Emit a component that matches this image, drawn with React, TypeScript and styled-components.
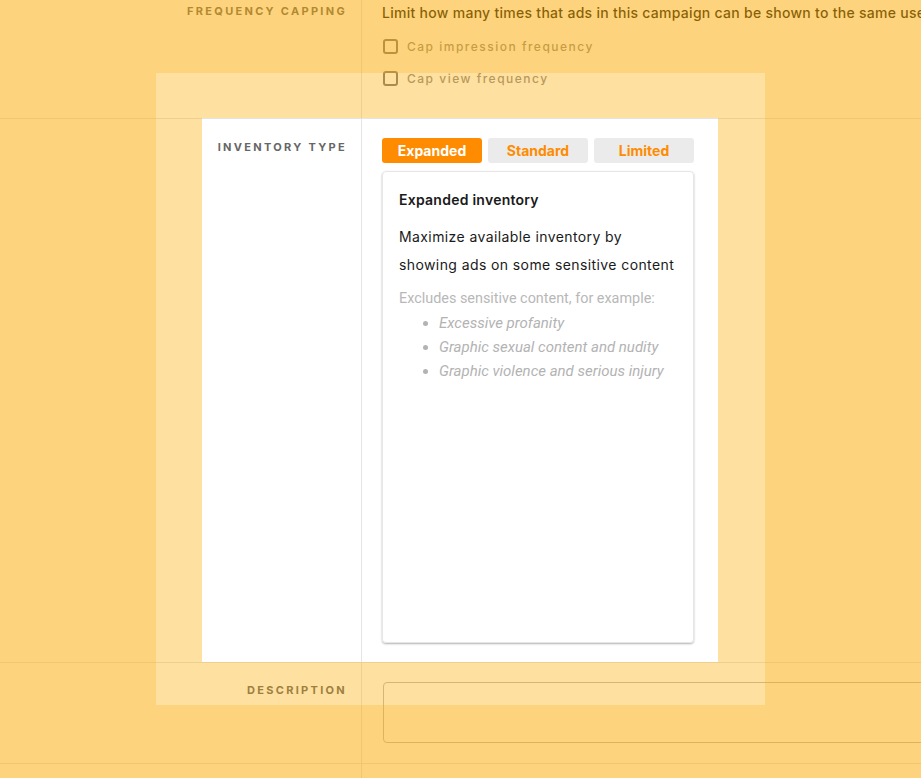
import React, { useState } from 'react';
import styled, { createGlobalStyle } from 'styled-components';

const GlobalStyle = createGlobalStyle`
  html, body {
    margin: 0;
    padding: 0;
    background: #fff;
    overflow: hidden;
  }
  body {
    font-family: Inter, "Noto Sans", sans-serif;
    color: #222;
  }
`;

//#region form
const Page = styled.div`
  width: 1400px;
  margin-top: -17px;
`;

const Row = styled.div`
  display: grid;
  grid-template-columns: 362px 1fr;
  border-bottom: 1px solid #e4e4e4;
`;

const Label = styled.div<{ $top?: number }>`
  box-sizing: border-box;
  padding: ${(p) => p.$top ?? 20}px 14px 0 0;
  border-right: 1px solid #e4e4e4;
  text-align: right;
  font-size: 11px;
  line-height: 16px;
  font-weight: 700;
  letter-spacing: 2.3px;
  text-transform: uppercase;
  color: #666;
`;

const Content = styled.div<{ $top?: number; $bottom?: number }>`
  padding: ${(p) => p.$top ?? 20}px 20px ${(p) => p.$bottom ?? 20}px 20px;
`;

const Lead = styled.div`
  font-size: 14px;
  line-height: 20px;
  font-weight: 500;
  letter-spacing: 0.28px;
  color: #111;
`;

const CheckList = styled.div`
  margin-top: 7px;
  display: flex;
  flex-direction: column;
`;

const CheckRow = styled.label`
  display: flex;
  align-items: center;
  height: 32px;
  gap: 9px;
  font-size: 12px;
  font-weight: 500;
  letter-spacing: 1.5px;
  color: #8f8f8f;
`;

const Box = styled.span`
  box-sizing: border-box;
  width: 15px;
  height: 15px;
  margin-left: 1px;
  border: 2px solid #7a7a7a;
  border-radius: 3px;
`;

const Tabs = styled.div`
  display: flex;
  gap: 6px;
`;

const Tab = styled.button<{ $active: boolean }>`
  width: 100px;
  height: 25px;
  padding: 0 0 1px;
  border: none;
  border-radius: 3px;
  font-family: Inter, "Noto Sans", sans-serif;
  font-size: 14px;
  font-weight: 700;
  cursor: pointer;
  background: ${(p) => (p.$active ? '#ff8c00' : '#ebebeb')};
  color: ${(p) => (p.$active ? '#fff' : '#ff8c00')};
`;

const Card = styled.div`
  box-sizing: border-box;
  width: 312px;
  height: 472px;
  margin-top: 8px;
  padding: 19px 16px;
  border: 1px solid #e6e6e6;
  border-radius: 4px;
  box-shadow: 0 1px 2px rgba(0, 0, 0, 0.3);
`;

const CardTitle = styled.div`
  font-size: 14px;
  line-height: 18px;
  font-weight: 600;
  letter-spacing: 0.25px;
  color: #1a1a1a;
`;

const CardText = styled.p`
  margin: 14px 0 0;
  font-size: 14px;
  line-height: 28px;
  letter-spacing: 0.4px;
  color: #1a1a1a;
`;

const Note = styled.div`
  margin-top: 8px;
  font-family: Roboto, "Liberation Sans", sans-serif;
  font-size: 14.4px;
  line-height: 24px;
  color: #b8b8b8;
`;

const NoteList = styled.ul`
  margin: 0;
  padding-left: 40px;
  font-size: 15px;
  font-style: italic;
  color: #b3b3b3;
`;

const TextArea = styled.div`
  box-sizing: border-box;
  height: 61px;
  margin-left: 1px;
  border: 1px solid #bdbdbd;
  border-radius: 4px;
`;
//#endregion

//#region spotlight
const Spotlight = styled.div`
  position: fixed;
  left: 156px;
  top: 73px;
  width: 609px;
  height: 632px;
  overflow: hidden;
  pointer-events: none;
  box-shadow: 0 0 0 3000px rgba(251, 170, 0, 0.51);
`;

const Hole = styled.div`
  position: absolute;
  left: 46px;
  top: 45px;
  right: 47px;
  bottom: 43px;
  box-shadow: 0 0 0 400px rgba(251, 170, 0, 0.37);
`;
//#endregion

const tabs = {
  Expanded: {
    title: 'Expanded inventory',
    text: ['Maximize available inventory by', 'showing ads on some sensitive content'],
    items: ['Excessive profanity', 'Graphic sexual content and nudity', 'Graphic violence and serious injury'],
  },
  Standard: {
    title: 'Standard inventory',
    text: ['Show ads on content that is', 'appropriate for most brands'],
    items: ['Strong profanity', 'Strong sexual content and discussions of sex', 'Violence, including violence causing injury'],
  },
  Limited: {
    title: 'Limited inventory',
    text: ['Show ads on content that is', 'free of most sensitive topics'],
    items: ['Moderate profanity', 'Moderate sexual content', 'Depictions of violence'],
  },
};

type TabName = keyof typeof tabs;

export default function App() {
  const [tab, setTab] = useState<TabName>('Expanded');
  const current = tabs[tab];

  return (
    <>
      <GlobalStyle />
      <Page>
        <Row>
          <Label>Frequency capping</Label>
          <Content $bottom={24}>
            <Lead>Limit how many times that ads in this campaign can be shown to the same user</Lead>
            <CheckList>
              <CheckRow><Box />Cap impression frequency</CheckRow>
              <CheckRow><Box />Cap view frequency</CheckRow>
            </CheckList>
          </Content>
        </Row>
        <Row>
          <Label>Inventory type</Label>
          <Content $top={19} $bottom={19}>
            <Tabs>
              {(Object.keys(tabs) as TabName[]).map((name) => (
                <Tab key={name} $active={name === tab} onClick={() => setTab(name)}>{name}</Tab>
              ))}
            </Tabs>
            <Card>
              <CardTitle>{current.title}</CardTitle>
              <CardText>{current.text[0]}<br />{current.text[1]}</CardText>
              <Note>
                Excludes sensitive content, for example:
                <NoteList>
                  {current.items.map((item) => <li key={item}>{item}</li>)}
                </NoteList>
              </Note>
            </Card>
          </Content>
        </Row>
        <Row>
          <Label $top={19}>Description</Label>
          <Content $top={19}>
            <TextArea />
          </Content>
        </Row>
        <Row>
          <Label />
          <Content />
        </Row>
      </Page>
      <Spotlight>
        <Hole />
      </Spotlight>
    </>
  );
}
